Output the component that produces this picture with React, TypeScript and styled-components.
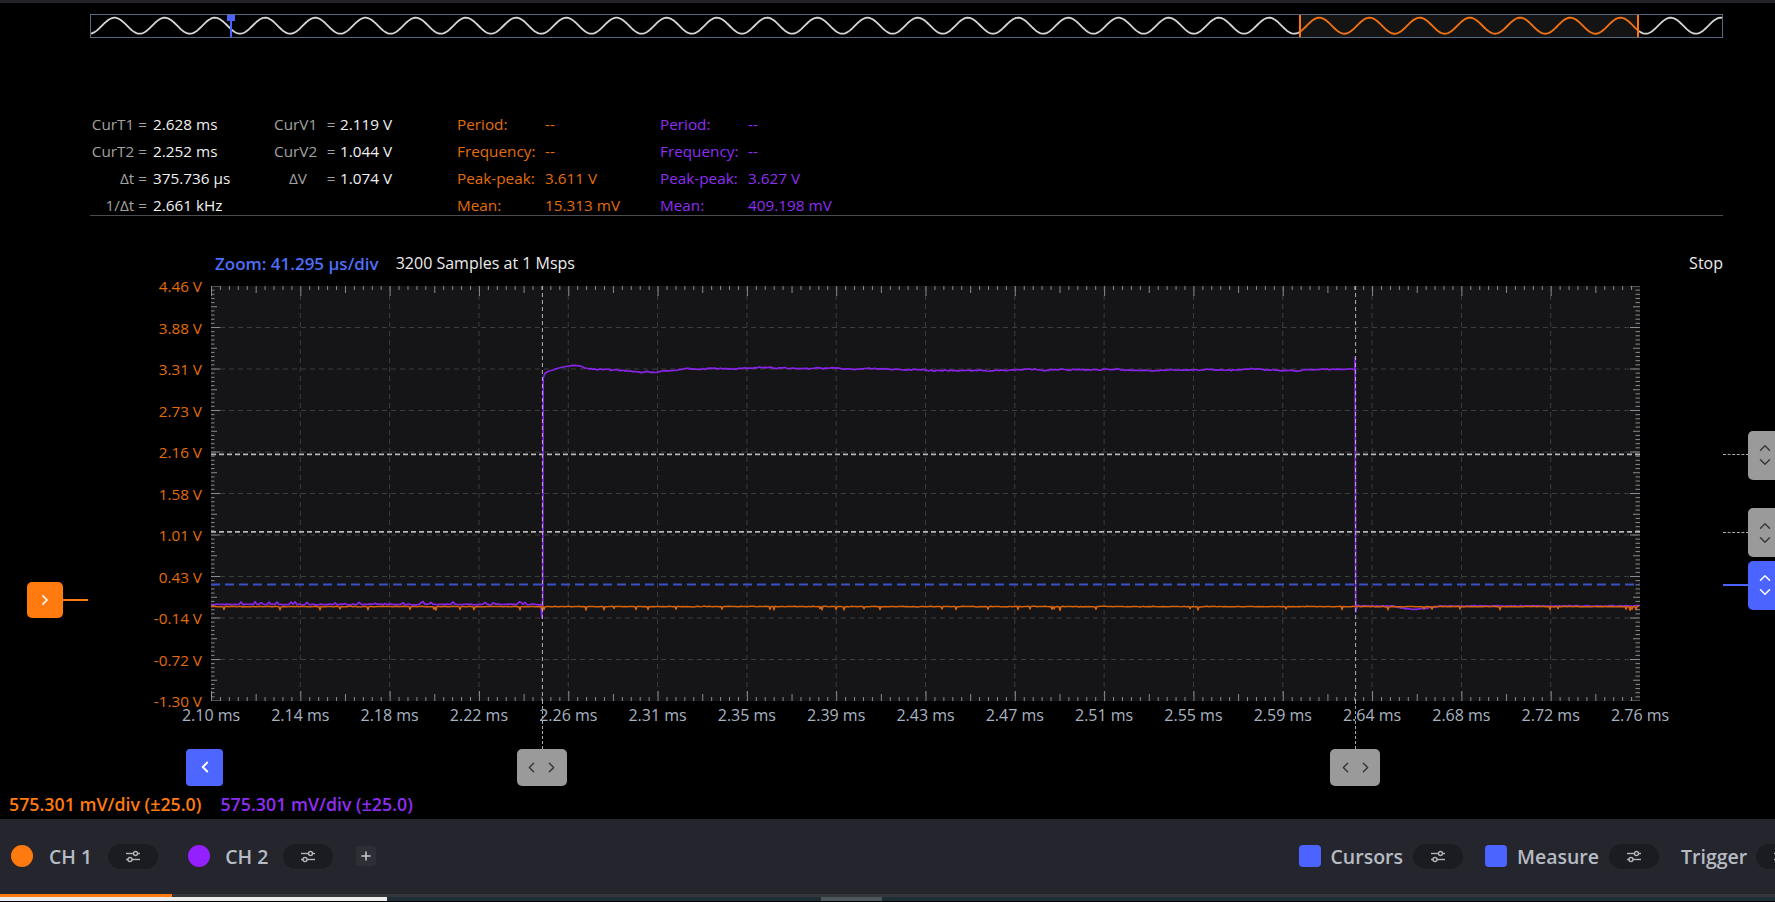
import React from "react";
import styled, { createGlobalStyle } from "styled-components";
import { ChevronLeft, ChevronRight, ChevronUp, ChevronDown, Plus } from "lucide-react";

const ORANGE = "#e26d0b";
const ORANGE_BRIGHT = "#ff7a0f";
const PURPLE = "#8f2ef2";
const PURPLE_TRACE = "#8724e6";
const BLUE = "#4b63ff";

const PLOT_LEFT = 211;
const PLOT_W = 1429;
const PLOT_H = 415;
const XDIV = PLOT_W / 16;
const YDIV = PLOT_H / 10;
const V_TOP = 4.453;
const V_SPAN = 5.753;
const T_START = 2.099;
const T_DIV = 0.041295;

const vToY = (v: number) => ((V_TOP - v) / V_SPAN) * PLOT_H;
const tToX = (t: number) => ((t - T_START) / T_DIV) * XDIV;

function mulberry32(seed: number) {
  let a = seed;
  return () => {
    a |= 0;
    a = (a + 0x6d2b79f5) | 0;
    let t = Math.imul(a ^ (a >>> 15), 1 | a);
    t = (t + Math.imul(t ^ (t >>> 7), 61 | t)) ^ t;
    return ((t ^ (t >>> 14)) >>> 0) / 4294967296;
  };
}

const toPath = (pts: [number, number][]) =>
  pts.map((p, i) => `${i ? "L" : "M"}${p[0].toFixed(1)},${p[1].toFixed(2)}`).join(" ");

const T2X = tToX(2.252);
const T1X = tToX(2.628);
const V1Y = vToY(2.119);
const V2Y = vToY(1.044);
const TRIG_Y = vToY(0.315);

function buildPurple() {
  const r = mulberry32(11);
  const pts: [number, number][] = [];
  for (let x = 0; x < T2X - 2; x += 2) {
    let y = 318.4 + (r() - 0.5) * 0.9;
    if (r() < 0.12) y -= 1 + r() * 1.6;
    pts.push([x, y]);
  }
  const rx = T2X;
  pts.push([rx - 1, 318.5], [rx, 332], [rx + 0.8, 318], [rx + 1.3, 92], [rx + 3, 87.5], [rx + 6, 85.5], [rx + 11, 84], [rx + 17, 82], [rx + 24, 80.5], [rx + 31, 79.3], [rx + 38, 79.8], [rx + 43, 82]);
  const g = (x: number, c: number, w: number) => Math.exp(-((x - c) ** 2) / (2 * w * w));
  const base = (x: number) =>
    83 + 1.2 * g(x, 400, 15) + 3 * g(x, 440, 22) - 0.6 * g(x, 560, 80) + 1.6 * g(x, 780, 60) + 0.9 * g(x, 1010, 90);
  let drift = 0;
  for (let x = rx + 47; x < T1X - 1; x += 2) {
    drift = drift * 0.85 + (r() - 0.5) * 0.9;
    pts.push([x, base(x) + drift + (r() - 0.5) * 0.8]);
  }
  pts.push([T1X - 0.5, 84], [T1X, 71], [T1X + 0.6, 326], [T1X + 2, 319]);
  for (let x = T1X + 4; x <= PLOT_W; x += 2) {
    let y = 320 + (r() - 0.5) * 0.8;
    if (x > 1181 && x < 1227) y += 3.2 * Math.sin(((x - 1181) / 46) * Math.PI);
    pts.push([x, y]);
  }
  return toPath(pts);
}

function buildOrange() {
  const r = mulberry32(5);
  const pts: [number, number][] = [];
  for (let x = 0; x <= PLOT_W; x += 2) {
    const y = 320.6 + (r() - 0.5) * 0.6;
    pts.push([x, y]);
    if (r() < 0.06) pts.push([x + 1, y + 2 + r() * 1.6]);
  }
  return toPath(pts);
}

function buildSine(x0: number, x1: number) {
  const pts: [number, number][] = [];
  for (let x = x0; x <= x1; x += 1) {
    pts.push([x, 10.7 - 8 * Math.cos((2 * Math.PI * (x - 23.5)) / 50.2)]);
  }
  return toPath(pts);
}

const PURPLE_PATH = buildPurple();
const ORANGE_PATH = buildOrange();
const OV_W = 1631;
const OV_SEL_A = 1209;
const OV_SEL_B = 1547;
const OV_CURSOR = 140;

const GlobalStyle = createGlobalStyle`
  html, body { margin: 0; padding: 0; background: #000; }
  body { font-family: "Open Sans", "Noto Sans", sans-serif; overflow: hidden; }
  * { box-sizing: border-box; }
`;

const Page = styled.div`
  width: 1775px;
  height: 902px;
  background: #000;
  display: flex;
  flex-direction: column;
  overflow: hidden;
`;

const TopEdge = styled.div`
  height: 3px;
  background: #232429;
  flex: none;
`;

const OverviewRow = styled.div`
  padding: 10.5px 0 0 90px;
  flex: none;
`;

const OverviewBox = styled.div`
  width: 1633px;
  height: 24px;
  border: 1px solid #56687e;
  display: flex;
`;

const MeasureBlock = styled.div`
  margin: 73.5px 0 0 90px;
  width: 1633px;
  height: 105px;
  border-bottom: 1px solid #4b4b4e;
  display: flex;
  flex: none;
`;

const MeasureColumn = styled.div<{ $width: number; $cols: string; $gap: number }>`
  width: ${(p) => p.$width}px;
  display: grid;
  grid-template-columns: ${(p) => p.$cols};
  grid-template-rows: repeat(4, 27px);
  column-gap: ${(p) => p.$gap}px;
  align-content: start;
  font-size: 15.3px;
  line-height: 27px;
  white-space: nowrap;
`;

const MLabel = styled.span<{ $align?: string; $color?: string }>`
  color: ${(p) => p.$color ?? "#a2a2a2"};
  text-align: ${(p) => p.$align ?? "left"};
`;

const MValue = styled.span<{ $color?: string }>`
  color: ${(p) => p.$color ?? "#f1f1f1"};
`;

const ScopeHeader = styled.div`
  margin: 36px 0 0 215px;
  width: 1508px;
  height: 22px;
  display: flex;
  align-items: center;
  gap: 17px;
  flex: none;
`;

const ZoomText = styled.span`
  color: #4d6ff7;
  font-size: 17px;
  font-weight: 600;
`;

const HeaderText = styled.span<{ $push?: boolean }>`
  color: #ececec;
  font-size: 16px;
  margin-left: ${(p) => (p.$push ? "auto" : "0")};
`;

const ChartArea = styled.div`
  position: relative;
  margin-top: 12px;
  flex: none;
`;

const ScopeBody = styled.div`
  display: flex;
  height: ${PLOT_H}px;
`;

const YAxis = styled.div`
  width: 202px;
  margin-right: 9px;
  margin-top: -9px;
  height: ${PLOT_H + 18}px;
  display: flex;
  flex-direction: column;
  justify-content: space-between;
  align-items: flex-end;
`;

const YLabel = styled.span`
  color: ${ORANGE};
  font-size: 15.3px;
  line-height: 18px;
`;

const PlotSvg = styled.svg`
  display: block;
  background: #151517;
  flex: none;
`;

const LevelLine = styled.div<{ $solid?: boolean }>`
  position: absolute;
  left: 1723px;
  width: 26px;
  border-top: ${(p) => (p.$solid ? `2px solid ${BLUE}` : "1.5px dashed #a8a8a8")};
`;

const LevelHandle = styled.div<{ $active?: boolean }>`
  position: absolute;
  left: 1748px;
  width: 40px;
  height: 49px;
  border-radius: 5px;
  background: ${(p) => (p.$active ? BLUE : "#9a9a9a")};
  color: ${(p) => (p.$active ? "#fff" : "#3a3a3a")};
  display: flex;
  flex-direction: column;
  justify-content: center;
  padding-left: 8px;
  svg { display: block; margin: -2px 0; }
`;

const ChannelMarker = styled.div`
  position: absolute;
  left: 27px;
  width: 36px;
  height: 36px;
  border-radius: 5px;
  background: ${ORANGE_BRIGHT};
  color: #fff;
  display: flex;
  align-items: center;
  justify-content: center;
`;

const MarkerLine = styled.div`
  position: absolute;
  left: 63px;
  width: 25px;
  border-top: 2px solid ${ORANGE_BRIGHT};
`;

const XAxis = styled.div`
  height: 25px;
  padding: 4px 0 0 ${PLOT_LEFT - XDIV / 2}px;
  display: flex;
`;

const XLabel = styled.span`
  width: ${XDIV}px;
  flex: none;
  text-align: center;
  color: #a8b3c0;
  font-size: 16px;
  line-height: 21px;
  white-space: nowrap;
`;

const HandleRow = styled.div`
  height: 59.5px;
  padding: 22.5px 0 0 186px;
  display: flex;
`;

const NavButton = styled.div`
  width: 37px;
  height: 37px;
  border-radius: 4px;
  background: #4d66ff;
  color: #fff;
  display: flex;
  align-items: center;
  justify-content: center;
`;

const CursorStem = styled.div`
  position: absolute;
  top: ${PLOT_H}px;
  height: 47.5px;
  border-left: 1px dashed #a9a9a9;
`;

const CursorHandle = styled.div`
  position: absolute;
  top: 462.5px;
  width: 50px;
  height: 37px;
  border-radius: 5px;
  background: #9a9a9a;
  color: #353535;
  display: flex;
  align-items: center;
  justify-content: center;
  gap: 3px;
`;

const ScaleRow = styled.div`
  height: 33px;
  padding: 8.5px 0 0 9px;
  display: flex;
  gap: 19px;
  flex: none;
`;

const ScaleText = styled.span<{ $color: string }>`
  color: ${(p) => p.$color};
  font-size: 17.8px;
  font-weight: 600;
  line-height: 20px;
  white-space: nowrap;
`;

const Toolbar = styled.div`
  height: 75.5px;
  background: #25262d;
  display: grid;
  grid-template-columns: 1287.5px auto;
  align-items: center;
  padding: 0 0 0 11px;
  flex: none;
`;

const ToolGroup = styled.div<{ $gap: number }>`
  display: flex;
  align-items: center;
  gap: ${(p) => p.$gap}px;
  flex: none;
`;

const ToolItem = styled.div<{ $gap: number }>`
  display: flex;
  align-items: center;
  gap: ${(p) => p.$gap}px;
  flex: none;
`;

const Dot = styled.span<{ $color: string }>`
  width: 22px;
  height: 22px;
  border-radius: 50%;
  background: ${(p) => p.$color};
  flex: none;
`;

const Square = styled.span`
  width: 22px;
  height: 22px;
  border-radius: 4px;
  background: ${BLUE};
  flex: none;
`;

const ItemLabel = styled.span`
  color: #b6bbc4;
  font-size: 19.5px;
  font-weight: 600;
  white-space: nowrap;
`;

const Pill = styled.span`
  width: 50px;
  height: 25px;
  border-radius: 13px;
  background: #1b1c21;
  display: flex;
  align-items: center;
  justify-content: center;
  flex: none;
`;

const AddButton = styled.span`
  width: 20px;
  height: 20px;
  border-radius: 3px;
  background: #2e2f36;
  color: #c8c8cc;
  display: flex;
  align-items: center;
  justify-content: center;
  margin-left: -7px;
`;

const Indicator = styled.div`
  height: 2.5px;
  background: #36373d;
  display: flex;
  flex: none;
`;

const IndicatorFill = styled.div`
  width: 172px;
  background: ${ORANGE_BRIGHT};
`;

const ScrollStrip = styled.div`
  height: 4.5px;
  background: #1f2d34;
  display: flex;
  flex: none;
`;

const StripPart = styled.div<{ $w: number; $bg: string; $ml?: number }>`
  width: ${(p) => p.$w}px;
  margin-left: ${(p) => p.$ml ?? 0}px;
  background: ${(p) => p.$bg};
`;

const SlidersIcon = () => (
  <svg width="16" height="13" viewBox="0 0 16 13" fill="none" stroke="#b4b4b8" strokeWidth="1.4">
    <line x1="1" y1="3.5" x2="15" y2="3.5" />
    <circle cx="10.5" cy="3.5" r="2" fill="#1b1c21" />
    <line x1="1" y1="9.5" x2="15" y2="9.5" />
    <circle cx="5" cy="9.5" r="2" fill="#1b1c21" />
  </svg>
);

const Overview = () => (
  <svg width={OV_W} height={22} style={{ display: "block" }}>
    <rect x={OV_SEL_A} y={0} width={OV_SEL_B - OV_SEL_A} height={22} fill="#141414" />
    <path d={buildSine(0, OV_SEL_A)} stroke="#d6d6d6" strokeWidth={1.8} fill="none" />
    <path d={buildSine(OV_SEL_A, OV_SEL_B)} stroke="#f07012" strokeWidth={1.9} fill="none" />
    <path d={buildSine(OV_SEL_B, OV_W)} stroke="#d6d6d6" strokeWidth={1.8} fill="none" />
    <line x1={OV_SEL_A} y1={0} x2={OV_SEL_A} y2={22} stroke="#ff7410" strokeWidth={2} />
    <line x1={OV_SEL_B} y1={0} x2={OV_SEL_B} y2={22} stroke="#ff7410" strokeWidth={2} />
    <line x1={OV_CURSOR} y1={0} x2={OV_CURSOR} y2={22} stroke={BLUE} strokeWidth={2} />
    <rect x={OV_CURSOR - 4} y={0} width={8} height={6} fill={BLUE} />
  </svg>
);

const Plot = () => {
  const vGrid = Array.from({ length: 15 }, (_, i) => (i + 1) * XDIV);
  const hGrid = Array.from({ length: 9 }, (_, i) => (i + 1) * YDIV);
  const xTicks = Array.from({ length: 161 }, (_, i) => ({ x: (i * XDIV) / 10, len: i % 10 === 0 ? 10 : i % 5 === 0 ? 7 : 4 }));
  const yTicks = Array.from({ length: 101 }, (_, i) => ({ y: (i * YDIV) / 10, len: i % 10 === 0 ? 9 : i % 5 === 0 ? 6 : 3.5 }));
  return (
    <PlotSvg width={PLOT_W} height={PLOT_H}>
      <g stroke="#3c3c40" strokeWidth={1} strokeDasharray="5 4">
        {vGrid.map((x) => (
          <line key={`v${x}`} x1={x} y1={0} x2={x} y2={PLOT_H} />
        ))}
        {hGrid.map((y) => (
          <line key={`h${y}`} x1={0} y1={y} x2={PLOT_W} y2={y} />
        ))}
      </g>
      <g stroke="#8a8a8e" strokeWidth={1}>
        {xTicks.map((t) => (
          <line key={`tt${t.x}`} x1={t.x + 0.5} y1={0} x2={t.x + 0.5} y2={t.len} />
        ))}
        {xTicks.map((t) => (
          <line key={`tb${t.x}`} x1={t.x + 0.5} y1={PLOT_H} x2={t.x + 0.5} y2={PLOT_H - t.len} />
        ))}
        {yTicks.map((t) => (
          <line key={`tl${t.y}`} x1={0} y1={t.y} x2={t.len} y2={t.y} />
        ))}
        {yTicks.map((t) => (
          <line key={`tr${t.y}`} x1={PLOT_W} y1={t.y} x2={PLOT_W - t.len - 1} y2={t.y} />
        ))}
      </g>
      <g stroke="#b6b6b6" strokeWidth={1.6} strokeDasharray="5 3">
        <line x1={0} y1={V1Y} x2={PLOT_W} y2={V1Y} />
        <line x1={0} y1={V2Y} x2={PLOT_W} y2={V2Y} />
      </g>
      <line x1={0} y1={TRIG_Y} x2={PLOT_W} y2={TRIG_Y} stroke="#3a50c8" strokeWidth={2} strokeDasharray="9 5" />
      <path d={PURPLE_PATH} stroke={PURPLE_TRACE} strokeWidth={1.7} fill="none" strokeLinejoin="round" />
      <path d={ORANGE_PATH} stroke="#d5640d" strokeWidth={1.5} fill="none" strokeLinejoin="round" />
      <g stroke="#b4b4b4" strokeWidth={1} strokeDasharray="4 3">
        <line x1={T2X + 0.5} y1={0} x2={T2X + 0.5} y2={PLOT_H} />
        <line x1={T1X + 0.5} y1={0} x2={T1X + 0.5} y2={PLOT_H} />
      </g>
    </PlotSvg>
  );
};

const Y_LABELS = ["4.46 V", "3.88 V", "3.31 V", "2.73 V", "2.16 V", "1.58 V", "1.01 V", "0.43 V", "-0.14 V", "-0.72 V", "-1.30 V"];
const X_LABELS = ["2.10 ms", "2.14 ms", "2.18 ms", "2.22 ms", "2.26 ms", "2.31 ms", "2.35 ms", "2.39 ms", "2.43 ms", "2.47 ms", "2.51 ms", "2.55 ms", "2.59 ms", "2.64 ms", "2.68 ms", "2.72 ms", "2.76 ms"];

const levels = [
  { y: V1Y + 1, active: false },
  { y: V2Y + 1, active: false },
  { y: TRIG_Y + 1, active: true },
];

export default function App() {
  return (
    <Page>
      <GlobalStyle />
      <TopEdge />
      <OverviewRow>
        <OverviewBox>
          <Overview />
        </OverviewBox>
      </OverviewRow>

      <MeasureBlock>
        <MeasureColumn $width={184} $cols="57px auto" $gap={6}>
          <MLabel $align="right">CurT1 =</MLabel>
          <MValue>2.628 ms</MValue>
          <MLabel $align="right">CurT2 =</MLabel>
          <MValue>2.252 ms</MValue>
          <MLabel $align="right">Δt =</MLabel>
          <MValue>375.736 µs</MValue>
          <MLabel $align="right">1/Δt =</MLabel>
          <MValue>2.661 kHz</MValue>
        </MeasureColumn>
        <MeasureColumn $width={183} $cols="48px 12px auto" $gap={3}>
          <MLabel>CurV1</MLabel>
          <MLabel $align="center">=</MLabel>
          <MValue>2.119 V</MValue>
          <MLabel>CurV2</MLabel>
          <MLabel $align="center">=</MLabel>
          <MValue>1.044 V</MValue>
          <MLabel $align="center">ΔV</MLabel>
          <MLabel $align="center">=</MLabel>
          <MValue>1.074 V</MValue>
        </MeasureColumn>
        <MeasureColumn $width={203} $cols="88px auto" $gap={0}>
          <MLabel $color={ORANGE}>Period:</MLabel>
          <MValue $color={ORANGE}>--</MValue>
          <MLabel $color={ORANGE}>Frequency:</MLabel>
          <MValue $color={ORANGE}>--</MValue>
          <MLabel $color={ORANGE}>Peak-peak:</MLabel>
          <MValue $color={ORANGE}>3.611 V</MValue>
          <MLabel $color={ORANGE}>Mean:</MLabel>
          <MValue $color={ORANGE}>15.313 mV</MValue>
        </MeasureColumn>
        <MeasureColumn $width={300} $cols="88px auto" $gap={0}>
          <MLabel $color={PURPLE}>Period:</MLabel>
          <MValue $color={PURPLE}>--</MValue>
          <MLabel $color={PURPLE}>Frequency:</MLabel>
          <MValue $color={PURPLE}>--</MValue>
          <MLabel $color={PURPLE}>Peak-peak:</MLabel>
          <MValue $color={PURPLE}>3.627 V</MValue>
          <MLabel $color={PURPLE}>Mean:</MLabel>
          <MValue $color={PURPLE}>409.198 mV</MValue>
        </MeasureColumn>
      </MeasureBlock>

      <ScopeHeader>
        <ZoomText>Zoom: 41.295 µs/div</ZoomText>
        <HeaderText>3200 Samples at 1 Msps</HeaderText>
        <HeaderText $push>Stop</HeaderText>
      </ScopeHeader>

      <ChartArea>
        <ScopeBody>
          <YAxis>
            {Y_LABELS.map((l) => (
              <YLabel key={l}>{l}</YLabel>
            ))}
          </YAxis>
          <Plot />
        </ScopeBody>
        <XAxis>
          {X_LABELS.map((l) => (
            <XLabel key={l}>{l}</XLabel>
          ))}
        </XAxis>
        <HandleRow>
          <NavButton>
            <ChevronLeft size={18} strokeWidth={2.4} />
          </NavButton>
        </HandleRow>

        {[T2X, T1X].map((x) => (
          <React.Fragment key={x}>
            <CursorStem style={{ left: PLOT_LEFT + x }} />
            <CursorHandle style={{ left: PLOT_LEFT + x - 25 }}>
              <ChevronLeft size={17} strokeWidth={2} />
              <ChevronRight size={17} strokeWidth={2} />
            </CursorHandle>
          </React.Fragment>
        ))}

        {levels.map((l) => (
          <React.Fragment key={l.y}>
            <LevelLine $solid={l.active} style={{ top: l.y - 1 }} />
            <LevelHandle $active={l.active} style={{ top: l.y - 24.5 }}>
              <ChevronUp size={18} strokeWidth={2} />
              <ChevronDown size={18} strokeWidth={2} />
            </LevelHandle>
          </React.Fragment>
        ))}

        <ChannelMarker style={{ top: 296 }}>
          <ChevronRight size={16} strokeWidth={2.6} />
        </ChannelMarker>
        <MarkerLine style={{ top: 313 }} />
      </ChartArea>

      <ScaleRow>
        <ScaleText $color={ORANGE_BRIGHT}>575.301 mV/div (±25.0)</ScaleText>
        <ScaleText $color={PURPLE}>575.301 mV/div (±25.0)</ScaleText>
      </ScaleRow>

      <Toolbar>
        <ToolGroup $gap={30}>
          <ToolItem $gap={16}>
            <Dot $color={ORANGE_BRIGHT} />
            <ItemLabel>CH 1</ItemLabel>
            <Pill>
              <SlidersIcon />
            </Pill>
          </ToolItem>
          <ToolItem $gap={15}>
            <Dot $color="#9420ff" />
            <ItemLabel>CH 2</ItemLabel>
            <Pill>
              <SlidersIcon />
            </Pill>
          </ToolItem>
          <AddButton>
            <Plus size={14} strokeWidth={2.6} />
          </AddButton>
        </ToolGroup>
        <ToolGroup $gap={22}>
          <ToolItem $gap={10}>
            <Square />
            <ItemLabel>Cursors</ItemLabel>
            <Pill>
              <SlidersIcon />
            </Pill>
          </ToolItem>
          <ToolItem $gap={10}>
            <Square />
            <ItemLabel>Measure</ItemLabel>
            <Pill>
              <SlidersIcon />
            </Pill>
          </ToolItem>
          <ToolItem $gap={9}>
            <ItemLabel>Trigger</ItemLabel>
            <Pill>
              <SlidersIcon />
            </Pill>
          </ToolItem>
        </ToolGroup>
      </Toolbar>
      <Indicator>
        <IndicatorFill />
      </Indicator>
      <ScrollStrip>
        <StripPart $w={387} $bg="#ececec" />
        <StripPart $w={61} $bg="#4c575b" $ml={434} />
      </ScrollStrip>
    </Page>
  );
}
